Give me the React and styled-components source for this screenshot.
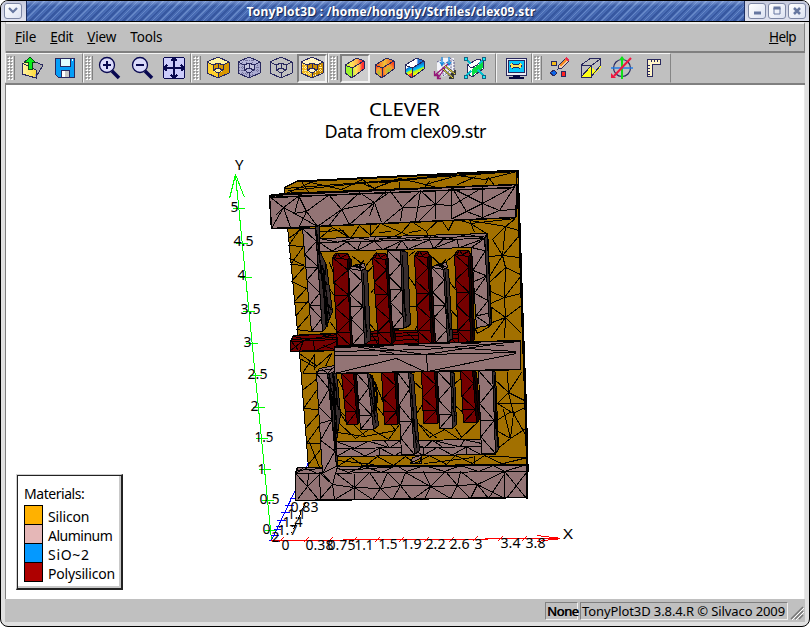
import React from "react";
import styled, { createGlobalStyle, css } from "styled-components";

const Global = createGlobalStyle`
  * { box-sizing: border-box; }
  html, body { margin: 0; background: #fff; overflow: hidden; }
  body { font-family: "Noto Sans", "Open Sans", sans-serif; color: #000; }
`;

/* ---------- window chrome ---------- */
const Window = styled.div`
  width: 810px; height: 627px; overflow: hidden;
  display: flex; flex-direction: column;
  border: 1px solid #000; border-radius: 8px; background: #e0e0e0;
`;
const TitleBar = styled.header`
  height: 21px; flex: none; display: flex;
  background: linear-gradient(#c5c9dc, #dfe2ef);
  border-bottom: 1px solid #000;
`;
const TitleSide = styled.div`
  width: ${(p) => p.$w}px; display: flex; align-items: center;
  gap: 2px; padding-left: 3px;
`;
const FrameButton = styled.button`
  width: 18px; height: 16px; padding: 0; border: 1px solid #7d87a5; border-radius: 3px;
  background: linear-gradient(135deg, #fff, #dce2f2); display: grid; place-items: center;
`;
const TitleText = styled.div`
  flex: 1; border-left: 1px solid #1c2f63; border-right: 1px solid #1c2f63;
  background:
    linear-gradient(rgba(205,220,255,.4), rgba(100,135,210,.1) 25%, rgba(60,80,160,.12)),
    repeating-linear-gradient(135deg, #688bc9 0 1px, #476bb3 1px 3px, #34569e 3px 5px, #476bb3 5px 6px);
  color: #fff; font: bold 12px/21px "Noto Sans", sans-serif; letter-spacing: ${(p) => p.$track}px;
  text-align: center; padding-left: 11px; text-shadow: 1px 1px 1px #102050; white-space: nowrap;
`;
const Body = styled.div`
  flex: 1; min-height: 0; display: flex; flex-direction: column;
  margin: 0 4px 4px; background: #c0c0c0;
`;
const MenuBar = styled.nav`
  height: 31px; flex: none; display: flex; align-items: center; gap: 14px;
  margin-left: 1px; padding: 0 8px 1px 9px;
  border-top: 2px solid #ededed; border-bottom: 2px solid #808080; border-right: 1px solid #808080;
`;
const MenuItem = styled.span`
  font-size: 13.5px; line-height: 20px; letter-spacing: ${(p) => p.$track || 0}px;
  ${(p) => p.$end && css`margin-left: auto;`}
  &::first-letter { text-decoration: ${(p) => (p.$plain ? "none" : "underline")}; }
`;
const Toolbar = styled.div`
  height: 32px; flex: none; display: flex; border-bottom: 2px solid #808080;
`;
const Group = styled.div`
  width: ${(p) => p.$w}px; flex: none; height: 30px; display: flex; align-items: center;
  border: 1px solid; border-color: #f4f4f4 #858585 #c0c0c0 #f4f4f4;
`;
const Grip = styled.div`
  width: ${(p) => p.$w}px; height: 24px; flex: none; display: flex;
  &::before {
    content: ""; width: 6px; margin-left: 1px;
    background: radial-gradient(circle at 1px 1px, #8a8a8a 0.6px, transparent 1px) 0 0 / 3px 3px,
      radial-gradient(circle at 2px 2px, #fff 0.7px, transparent 1px) 0 0 / 3px 3px;
  }
  &::after { content: ""; width: 1px; margin-left: 1px; background: #808080; }
`;
const ToolButton = styled.button`
  width: ${(p) => p.$w}px; height: 29px; padding: 0; flex: none; display: grid; place-items: center;
  background: transparent; border: 2px solid transparent;
  ${(p) => p.$pressed && css`background: #cdcdcd; border-color: #808080 #f2f2f2 #f2f2f2 #808080;`}
`;
const Glyph = styled.svg`width: 24px; height: 24px; display: block; overflow: visible; shape-rendering: ${(p) => (p.$soft ? "auto" : "crispEdges")};`;

const Canvas = styled.main`
  position: relative; flex: 1; min-height: 0; background: #fff; overflow: hidden;
  border-left: 1px solid #808080; border-right: 1px solid #e8e8e8;
`;
const Scene = styled.svg`display: block; width: 798px; height: 515px;`;
const Legend = styled.section`
  position: absolute; left: 10px; top: 389px; width: 107px; height: 116px;
  border: 1px solid #d0d0d0; border-right: 2px solid #222; border-bottom: 2px solid #222;
  background: #fff; padding: 11px 0 0 7px;
  box-shadow: inset 1px 1px 0 #222, inset -2px -2px 0 #c9c9c9;
  font-size: 14px; line-height: 19px;
`;
const LegendTitle = styled.div`height: 19px; letter-spacing: -0.45px; line-height: 16px;`;
const LegendRow = styled.div`
  height: 19px; display: flex; gap: 5px; line-height: 24px; white-space: nowrap; letter-spacing: ${(p) => p.$track}px;
`;
const Swatch = styled.i`width: 19px; height: 20px; border: 1px solid #000; background: ${(p) => p.$color};`;

const StatusBar = styled.footer`
  height: 23px; flex: none; display: flex; justify-content: flex-end; align-items: center; gap: 2px;
  padding-right: 1px; font-size: 13px; line-height: 16px; background: #c0c0c0;
`;
const StatusCell = styled.span`
  width: ${(p) => p.$w}px; height: 18px; padding-left: 1px; white-space: nowrap;
  border: 1px solid; border-color: #808080 #efefef #efefef #808080;
  letter-spacing: ${(p) => p.$track}px; ${(p) => p.$strong && css`text-shadow: 0.5px 0 #000;`}
`;

/* ---------- toolbar icons ---------- */
const NAVY = "#28285e";
const Ink = ({ d, w = 1, c = NAVY, f = "none" }) => <path d={d} stroke={c} strokeWidth={w} fill={f} />;

const Cube = ({ top, left, right, wire, dots }) => (
  <Glyph viewBox="0 0 24 24">
    {top && (
      <>
        <path d="M12 1L23 6V17L12 22L1 17V6Z" fill={left} />
        <path d="M12 11L23 6V17L12 22Z" fill={right} />
        <path d="M1 6L12 1L23 6L17 9L12 7L7 9Z" fill={top} />
        <path d="M7 9L12 7L17 9V14L12 17L7 14Z" fill={wire ? "#c5c5de" : right} />
        <path d="M7 15L12 12L17 15L12 17Z" fill={top} />
      </>
    )}
    {dots && <path d="M2 8H7M2 11H7M2 14H7M4 17H12M13 19H17M17 11H23M17 14H23M6 4H18M5 6V18M9 16V21M15 16V20M20 7V18M9 2V8M15 2V8" stroke={dots} strokeWidth="1" strokeDasharray="1 1" />}
    <Ink d="M12 1L23 6V17L12 22L1 17V6ZM1 6L7 9L12 7L17 9L23 6M7 9V14L12 17L17 14V9M12 7V12L7 14M12 12L17 14M12 17V22" />
  </Glyph>
);
const Prism = ({ face, side, top }) => (
  <>
    <path d="M2 9L9 12V22L2 17Z" fill={face} />
    <path d="M9 12L21 5V13L9 22Z" fill={side} />
    <path d="M2 9L14 2L21 5L9 12Z" fill={top} />
    <Ink d="M2 9L14 2L21 5V13L9 22L2 17ZM2 9L9 12L21 5M9 12V22" />
  </>
);
const Gradients = () => (
  <defs>
    <linearGradient id="heat" x1="0" x2="1"><stop stopColor="#b8f53a" /><stop offset=".35" stopColor="#ffe25a" /><stop offset=".65" stopColor="#ffb04a" /><stop offset=".85" stopColor="#f33" /></linearGradient>
    <radialGradient id="lime" cx=".55" cy=".6" r=".75"><stop stopColor="#96c830" /><stop offset=".4" stopColor="#f8a030" /><stop offset=".8" stopColor="#f8401c" /></radialGradient>
    <linearGradient id="warm" x1="0" x2="1"><stop stopColor="#f8401c" /><stop offset=".5" stopColor="#f0c038" /><stop offset="1" stopColor="#f8401c" /></linearGradient>
    <linearGradient id="bands" y1="0" y2="1" x1="0" x2=".3"><stop stopColor="#fff" /><stop offset=".3" stopColor="#fff" /><stop offset=".32" stopColor="#16c" /><stop offset=".55" stopColor="#0cf" /><stop offset=".6" stopColor="#9e3" /><stop offset=".8" stopColor="#ff0" /><stop offset=".85" stopColor="#f42" /></linearGradient>
    <linearGradient id="cool" x1="0" x2="1"><stop stopColor="#fff" /><stop offset=".6" stopColor="#fff" /><stop offset=".7" stopColor="#1870d8" /><stop offset="1" stopColor="#1870d8" /></linearGradient>
    <linearGradient id="paper" x1="0" x2="1"><stop stopColor="#fff5aa" /><stop offset="1" stopColor="#ffda38" /></linearGradient>
  </defs>
);
const OpenIcon = () => (
  <Glyph viewBox="0 0 24 24">
    <path d="M7 6L17 6L23 9L17 21L11 16Z" fill="#adadad" />
    <path d="M2 7L6 5L16 14L15 22L2 18Z" fill="url(#paper)" />
    <Ink d="M2 7V18L16 22V14L2 7M15 6L23 9L16 21M4 6L7 4" />
    <path d="M10 1L15 6H12V13H8V6H5Z" fill="#08ef18" stroke="#064c12" />
  </Glyph>
);
const SaveIcon = () => (
  <Glyph viewBox="0 0 24 24">
    <path d="M2 2H21V21H5L2 18Z" fill="#049ef8" stroke={NAVY} />
    <rect x="7" y="2" width="10" height="8" fill="#dffcff" stroke={NAVY} />
    <rect x="8" y="14" width="8" height="7" fill="#c6c6c6" stroke={NAVY} />
    <rect x="9" y="15" width="3" height="6" fill="#fff" /><path d="M19 3V5" stroke="#fff" />
  </Glyph>
);
const ZoomIcon = ({ plus }) => (
  <Glyph viewBox="0 0 24 24" $soft>
    <circle cx="10" cy="9" r="7.5" fill="#dadafa" stroke="#080850" strokeWidth="1.3" />
    <path d="M15 15L22 22" stroke="#080850" strokeWidth="3.5" />
    <path d={plus ? "M6 9H14M10 5V13" : "M6 9H14"} stroke="#080850" strokeWidth="2" />
  </Glyph>
);
const FitIcon = () => (
  <Glyph viewBox="0 0 24 24">
    <rect x="1.5" y="1.5" width="21" height="21" rx="2" fill="#ccccfb" stroke="#080850" />
    <path d="M2 12H22M12 2V22M9 5L12 2L15 5M9 19L12 22L15 19M5 9L2 12L5 15M19 9L22 12L19 15" stroke="#080850" fill="none" strokeWidth="1.5" />
  </Glyph>
);
const VectorIcon = () => (
  <Glyph viewBox="0 0 24 24" $soft>
    <path d="M4 6L10 2L21 2V15L10 21L4 14Z" fill="#f4f4fa" />
    <path d="M4 6L10 3M8 10L18 4V14L10 20V10M17 2L21 5V16L14 20" stroke="#555587" strokeDasharray="2 1" fill="none" />
    <path d="M9 1V8M16 1V8M7 6L9 9L11 6M14 6L16 9L18 6" stroke="#1689de" fill="none" strokeWidth="1.3" />
    <path d="M15 8L2 19M1.5 15V19.5H6M12 12L5 22M4.5 18V22.5H8" stroke="#951577" fill="none" strokeWidth="1.3" />
    <path d="M12 10L22 18M22 14V18H18M10 13L20 22M20 18V22H16" stroke="#333" fill="none" strokeWidth="1.8" />
    <path d="M12 10L22 18M10 13L20 22" stroke="#ffed32" />
  </Glyph>
);
const ExpandIcon = () => (
  <Glyph viewBox="0 0 24 24">
    <path d="M4 9L15 3L20 5V13L9 21L4 17Z" fill="#fff" />
    <path d="M4 11L9 13L20 6V12L9 20V13Z" fill="#05dc44" />
    <Ink d="M4 9L15 3L20 5V13L9 21L4 17ZM4 9L9 12L20 5" />
    <path d="M3 3L8 8M21 3L16 8M3 20L8 15M21 20L15 14" stroke="#04bfd0" strokeWidth="2" />
    {[[1, 1], [19, 1], [1, 19], [19, 19]].map(([x, y]) => <rect key={`${x}${y}`} x={x} y={y} width="3" height="3" fill="#18eefa" stroke="#186382" />)}
  </Glyph>
);
const MonitorIcon = () => (
  <Glyph viewBox="0 0 24 24">
    <rect x="2" y="2" width="20" height="17" fill="#ececf4" stroke={NAVY} />
    <rect x="4" y="4" width="16" height="12" fill="#08c7fb" stroke={NAVY} />
    <path d="M7 8L9 10L7 12M17 8L15 10L17 12M8 10H16" stroke={NAVY} strokeWidth="3.4" fill="none" />
    <path d="M7 8L9 10L7 12M17 8L15 10L17 12M8 10H16" stroke="#ffe45b" strokeWidth="1.5" fill="none" />
    <path d="M9 19H16V21H20V23H5V21H9Z" fill="#080840" />
  </Glyph>
);
const DrawIcon = () => (
  <Glyph viewBox="0 0 24 24">
    <rect x="3" y="5" width="5" height="4" fill="#f5bd18" stroke={NAVY} />
    <rect x="13" y="15" width="4" height="5" fill="#f22" stroke={NAVY} />
    <path d="M6 14L9 17L6 20L2 17Z" fill="#0b65e8" stroke={NAVY} />
    <path d="M11 9L18 2L21 5L14 12L10 13Z" fill="#f4cda8" stroke={NAVY} />
    <path d="M12 10L19 3" stroke="#f48922" strokeWidth="2" /><path d="M18 2L21 5" stroke="#ed284f" strokeWidth="2" />
  </Glyph>
);
const CutIcon = () => (
  <Glyph viewBox="0 0 24 24">
    <path d="M2 21L12 10V21ZM12 10L22 4V11L12 21Z" fill="#ffff16" />
    <path d="M12 10L21 3V11L16 15Z" fill="#c0c0c0" />
    <Ink d="M2 9L12 10V21H2ZM2 9L12 2L21 2V10L12 21M12 10L21 3M2 21L12 10" />
  </Glyph>
);
const RotateIcon = () => (
  <Glyph viewBox="0 0 24 24" $soft>
    <circle cx="12" cy="12" r="8.5" fill="none" stroke={NAVY} strokeWidth="1.2" />
    <path d="M12 1V23" stroke="#10df19" strokeWidth="2" /><path d="M1 12H23" stroke="#247ce6" strokeWidth="1.6" />
    <path d="M21 2L4 20" stroke="#ef1640" strokeWidth="2" fill="none" /><path d="M1 17L6 22H1Z" fill="#ef1640" />
    <path d="M9 4L12 0L15 4" fill="#10df19" />
  </Glyph>
);
const RulerIcon = () => (
  <Glyph viewBox="0 0 24 24">
    <path d="M5 3H18V8H10V20H5Z" fill="#fff5c7" stroke={NAVY} />
    <path d="M9 4V6M12 4V6M15 4V6M6 9H8M6 12H8M6 15H8M6 18H8" stroke={NAVY} />
  </Glyph>
);

/* ---------- device scene ---------- */
const SI = "#a27000", AL = "#937475", RED = "#750000", DARK = "#382e2f";
const mix = (a, b, t) => [a[0] + (b[0] - a[0]) * t, a[1] + (b[1] - a[1]) * t];
const pt = (p) => `${p[0].toFixed(1)} ${p[1].toFixed(1)}`;
const seg = (a, b) => `M${pt(a)}L${pt(b)}`;

/* A quad a-b (start edge) to d-c (end edge), split in n cells with diagonals. */
const Bar = ({ q, n = 5, fill, shift = 0 }) => {
  const [a, b, c, d] = q;
  let mesh = "";
  for (let i = 0; i < n; i++) {
    const t0 = i / n, t1 = (i + 1) / n;
    mesh += i % 2 === shift ? seg(mix(a, d, t0), mix(b, c, t1)) : seg(mix(b, c, t0), mix(a, d, t1));
    if (i && i % 3 === 0) mesh += seg(mix(a, d, t0), mix(b, c, t0));
  }
  return <><path d={`M${q.map(pt).join("L")}Z`} fill={fill} stroke="#000" /><path d={mesh} stroke="#000" fill="none" /></>;
};
const Poly = ({ p, fill, w = 1 }) => <polygon points={p} fill={fill} stroke="#000" strokeWidth={w} />;
const fan = (c, pts) => pts.map((p) => seg(c, p)).join("");

const Finger = ({ x1, x2, y1, x3, x4, y2, color, n = 5, side = 4 }) => {
  const edge = color === RED ? "#190000" : DARK;
  return (
    <>
      <Poly p={`${x2},${y1} ${x2 + side},${y1 + 2} ${x4 + side},${y2 - 4} ${x4},${y2}`} fill={edge} />
      <path d={`M${x2 + 2} ${y1 + 5}L${x4 + 2} ${y2 - 6}M${x2 + 3} ${y1 + 20}L${x4} ${y2 - 25}M${x2} ${y1 + 30}L${x4 + 3} ${y2 - 12}`} stroke="#000" />
      <Bar q={[[x1, y1], [x2, y1], [x4, y2], [x3, y2]]} n={n} fill={color} />
    </>
  );
};

const upperRed = [[333, 348, 257, 338, 351, 345], [373, 386, 257, 379, 392, 344], [415, 428, 255, 419, 432, 343], [455, 469, 254, 459, 471, 343]];
const upperAl = [[349, 362, 268, 353, 365, 344, 6], [388, 401, 250, 393, 404, 328, 7], [432, 444, 267, 436, 448, 342, 5]];
const lowerRed = [[342, 354, 373, 347, 358, 424], [382, 395, 372, 385, 398, 424], [422, 435, 371, 424, 438, 423], [461, 473, 370, 464, 477, 422]];
const lowerAl = [[357, 368, 373, 361, 374, 429, 5], [398, 409, 372, 402, 415, 454, 5], [438, 451, 371, 440, 453, 428, 4], [479, 493, 370, 482, 496, 453, 3]];

const siliconMesh = [
  /* left strip */
  "M289 238L303 228M289 245L304 246M289 245L301 228M291 264L305 265M291 264L304 246M305 265L290 258M292 281L306 265M292 281L307 288M294 302L308 302M294 302L307 288M296 316L309 300M297 329L310 314M297 329L312 331M300 353L318 366M303 373L315 354M303 373L317 373M304 389L318 378M304 408L319 409M304 408L317 390M306 428L321 411M307 443L322 443M307 443L320 425M308 465L322 448M315 353V369M332 353L326 366M302 359L316 367L333 352M320 467L310 442",
  /* strip under the top bar */
  "M320 238L333 227L351 238L360 225L371 235L381 223L402 232L412 221L427 231L441 218L449 230L455 218L471 223L487 233M371 235V223M402 232L420 239M402 232L390 239M427 231L430 238M351 238L340 228M470 219L475 232M471 223L516 218M320 231L345 230M380 232L392 231M410 232L422 230",
  fan([506, 226], [[470, 220], [519, 230], [503, 255], [493, 239], [516, 218]]),
  fan([503, 255], [[489, 256], [520, 257], [493, 239], [519, 236], [490, 276], [506, 267]]),
  fan([506, 267], [[490, 282], [521, 274], [505, 297]]),
  fan([505, 297], [[491, 303], [522, 293], [491, 291], [506, 317], [521, 276]]),
  fan([506, 317], [[491, 306], [474, 329], [491, 338], [505, 338], [522, 333], [522, 305]]),
  fan([509, 392], [[494, 378], [525, 400], [522, 372], [498, 403], [514, 413], [508, 372]]),
  fan([514, 413], [[498, 403], [527, 406], [511, 438], [527, 436]]),
  fan([511, 438], [[497, 430], [497, 449], [528, 427], [504, 409]]),
  "M497 420L512 411M490 456L528 457M497 403L526 403M500 464L528 457",
  /* gaps between fingers */
  "M330 262L335 275M326 282L338 300M331 322L339 333M365 275L376 263M371 293L379 282M370 323L378 333M409 276L418 289M408 306L420 306M411 338L420 321M449 280L459 293M450 308L461 320M471 286L478 300M472 321L478 333L490 326M353 256L366 266L377 252M430 254L442 265L458 252M470 260L474 250M410 255L416 250",
  "M339 379L347 397M339 410L348 424M376 383L385 405M378 407L396 430M413 380L424 390M415 416L426 400M454 384L464 376M455 405L464 412",
  "M338 432L365 436L396 430M341 424L356 438L371 428L389 439L400 424M415 418L430 437L445 429L460 439L480 420M340 410L366 436M420 424L438 438M456 428L463 438",
  /* strip above the bottom bar */
  "M338 466L352 457L365 466L378 456L394 465L406 456L416 463L430 455L447 464L456 455L473 463L485 455L502 463M338 460L375 464M425 463L474 457M475 455V464",
].join("");

const topBarMesh = [
  fan([284, 207], [[271, 197], [300, 195], [272, 228], [276, 215], [295, 213], [291, 227]]),
  fan([307, 211], [[299, 195], [295, 213], [299, 228], [318, 226], [330, 194]]),
  fan([342, 209], [[329, 194], [360, 192], [318, 226], [329, 226], [350, 224]]),
  fan([375, 202], [[360, 192], [386, 191], [342, 209], [370, 216], [382, 222], [391, 191]]),
  fan([403, 207], [[391, 191], [421, 190], [385, 222], [401, 221], [416, 207]]),
  fan([436, 204], [[421, 190], [452, 188], [418, 207], [419, 221], [436, 218], [453, 205], [436, 190]]),
  fan([467, 211], [[453, 188], [483, 203], [453, 218], [483, 217]]),
  fan([500, 210], [[483, 203], [516, 185], [483, 217], [516, 209]]),
  "M300 195L295 213L318 226M375 202L350 224M421 190L416 221M452 188V218M483 186V217M483 203L516 185M272 228L316 228M483 203L453 188M453 205L483 187",
].join("");

const bottomBarMesh = [
  fan([308, 486], [[296, 473], [298, 499], [321, 473], [319, 499], [309, 473]]),
  fan([333, 484], [[321, 473], [335, 499], [320, 499], [354, 487], [336, 473]]),
  fan([355, 487], [[337, 473], [355, 473], [337, 498], [355, 499], [381, 488], [370, 472], [373, 499]]),
  fan([381, 488], [[370, 472], [402, 485], [373, 499], [392, 499], [388, 472]]),
  fan([401, 485], [[388, 472], [406, 472], [393, 499], [431, 485], [412, 499]]),
  fan([431, 486], [[406, 472], [424, 471], [413, 499], [425, 499], [451, 498], [446, 471]]),
  fan([458, 485], [[446, 471], [461, 471], [431, 486], [451, 498], [471, 498], [478, 484]]),
  fan([478, 484], [[461, 471], [505, 471], [471, 498], [489, 498]]),
  "M505 471V498L478 484M506 472L489 498M507 498L527 472M506 472L527 498M320 473L321 499",
].join("");

const Device = () => (
  <g shapeRendering="crispEdges" strokeWidth="1" fill="none" strokeLinejoin="round">
    {/* substrate */}
    <Poly p="288,226 518,202 521,240 523,320 526,390 528,440 528,472 309,468 300,352" fill={SI} />
    <path d={siliconMesh} stroke="#000" />
    <path d="M518 170L520 230L523 320L526 400L528 472" stroke="#000" strokeWidth="2.5" />
    <Poly p="285,187 297,181 518,170 519,184 285,194" fill={SI} />
    <path d="M285 188L518 170M289 190L350 184L430 177L518 171M287 193L311 182L342 189L363 179L374 188L400 178L426 184L458 175L485 179L518 171M302 181L310 193M363 183L380 190M374 188L398 179M424 188L430 181M426 184L445 189M458 184L477 176M486 184L489 177L495 185M400 190V181" stroke="#000" />
    <path d="M298 181L518 170M380 182L456 174" stroke="#000" strokeWidth="2" />
    {/* top rail */}
    <Poly p="270,196 285,194 518,184 516,217 272,228" fill={AL} w={1.5} />
    <path d={topBarMesh} stroke="#000" />
    <path d="M270 197L516 187M270 195L285 193L518 184" stroke="#000" strokeWidth="1.5" />
    <path d="M517 170V216M519 170V200" stroke="#000" strokeWidth="1.5" />
    {/* upper loop */}
    <Poly p="316,226 320,225 321,252 327,265 333,311 326,328 323,331" fill={DARK} />
    <path d="M317 230L328 327M319 250L325 290L326 325M321 262L329 323M326 265L324 295L332 310M323 265L330 316M318 242L321 242M319 269L328 285" stroke="#000" strokeWidth="1.3" />
    <Bar q={[[303, 228], [316, 228], [323, 331], [312, 331]]} n={8} fill={AL} />
    <Bar q={[[320, 242], [320, 251], [472, 247], [485, 238]]} n={12} fill={AL} />
    <Bar q={[[320, 238], [320, 242], [485, 238], [487, 233]]} n={9} fill={AL} />
    <path d="M380 238L485 236" stroke="#000" />
    <Poly p="485,238 488,233 492,324 489,326" fill={DARK} w={1.5} />
    <Bar q={[[472, 247], [485, 238], [490, 325], [477, 327]]} n={7} fill={AL} />
    {/* gate runner behind the fingers */}
    <Poly p="346,331 462,329 462,344 346,344" fill={RED} />
    <path d="M346 333L462 332M346 337L462 334M346 341L462 338M370 330L378 343L389 330M407 332L419 342M448 331L456 343" stroke="#000" />
    <Poly p="388,250 405,250 409,326 393,330" fill={DARK} />
    {upperRed.map(([x1, x2, y1, x3, x4, y2]) => (
      <g key={x1}>
        <Finger x1={x1} x2={x2} y1={y1} x3={x3} x4={x4} y2={y2} color={RED} n={7} />
        <Poly p={`${x1},${y1} ${x1 + 3},${y1 - 4} ${x2},${y1 - 4} ${x2 + 2},${y1} ${x2},${y1 + 2}`} fill={RED} />
        <path d={`M${x1 + 2} ${y1}L${x1 + 5} ${y1 - 4}L${x1 + 8} ${y1}L${x2} ${y1 - 3}`} stroke="#000" />
      </g>
    ))}
    {upperAl.map(([x1, x2, y1, x3, x4, y2, side]) => (
      <g key={x1}>
        <Finger x1={x1} x2={x2} y1={y1} x3={x3} x4={x4} y2={y2} side={side} color={AL} n={6} />
        {y1 > 260 && <><Poly p={`${x1},${y1} ${x1 + 5},${y1 - 3} ${x2 + 3},${y1 - 5} ${x2 + 4},${y1} ${x2},${y1 + 2}`} fill={AL} /><path d={`M${x1 + 5} ${y1 - 2}L${x2 + 3} ${y1 - 1}M${x1 + 7} ${y1 - 4}L${x2} ${y1 + 1}M${x2 - 4} ${y1}L${x2 + 2} ${y1 - 8}`} stroke="#000" strokeWidth="1.5" /></>}
      </g>
    ))}
    {/* polysilicon contact */}
    <Poly p="291,341 294,335 337,333 337,350 291,351" fill={RED} w={1.5} />
    <path d="M292 339L337 337M294 336L308 339L337 334M291 341L337 339M291 350L304 340L300 351M314 340L315 350M316 350L337 341M324 345L337 350M292 341L299 350M322 334L334 338" stroke="#000" />
    {/* lower loop */}
    <Bar q={[[337, 441], [337, 448], [496, 446], [481, 439]]} n={9} fill={AL} />
    <Bar q={[[337, 448], [337, 456], [496, 454], [496, 446]]} n={11} fill={AL} shift={1} />
    <Poly p="328,369 335,365 338,381 341,414 337,440 338,470 332,484" fill={DARK} />
    <path d="M330 372L336 470M333 368L338 438M335 375L335 465M331 387L340 410M334 395L337 455M328 376L335 387L332 408M336 383L338 405" stroke="#000" strokeWidth="1.4" />
    <path d="M317 373L320 368L335 365L337 370L328 374Z" fill={AL} stroke="#000" />
    <path d="M317 371L334 368M322 368L328 373L336 365" stroke="#000" />
    {lowerRed.map(([x1, x2, y1, x3, x4, y2]) => <Finger key={x1} x1={x1} x2={x2} y1={y1} x3={x3} x4={x4} y2={y2} color={RED} n={4} />)}
    {lowerAl.map(([x1, x2, y1, x3, x4, y2, side]) => <Finger key={x1} x1={x1} x2={x2} y1={y1} x3={x3} x4={x4} y2={y2} side={side} color={AL} n={y2 > 440 ? 5 : 4} />)}
    <path d="M371 375L376 384L378 398L374 414M373 377L376 406" stroke="#000" strokeWidth="2" />
    {/* middle rail */}
    <Poly p="335,346 521,340 521,369 335,373" fill={AL} w={1.5} />
    <path d="M335 355L425 354L517 352M335 347L370 346L425 354L521 340M335 351L426 349L521 341M370 347L400 344L450 347L517 351M427 354L428 371L517 353M335 373L397 358L425 371M350 345L395 353M410 343L453 342L505 345" stroke="#000" />
    {/* bottom rail */}
    <Poly p="296,473 298,467 322,467 338,466 527,464 527,497 296,500" fill={AL} w={1.5} />
    <path d={bottomBarMesh} stroke="#000" />
    <path d="M296 473L527 471M298 470L321 468L356 469L400 466L527 465M297 473L304 467L318 473L337 467L349 472L365 466L382 472L397 465L407 471L425 465L445 471L461 465L479 471L494 465L505 471L527 464" stroke="#000" />
    <path d="M411 463L413 457L422 455L422 463ZM411 460L420 463L422 457L411 463" stroke="#000" fill={AL} />
    <Bar q={[[317, 373], [328, 373], [337, 466], [323, 473]]} n={6} fill={AL} />
    <path d="M323 473L333 484L338 466" stroke="#000" fill={AL} />
    <path d="M527 465V498" stroke="#000" strokeWidth="2" />
  </g>
);

/* [label, x, baseline, text width] */
const yLabels = [["5", 231, 211, 8], ["4.5", 234, 245, 20], ["4", 238, 279, 8], ["3.5", 241, 313, 20], ["3", 244, 346, 8], ["2.5", 248, 378, 20], ["2", 251, 410, 8], ["1.5", 255, 441, 19], ["1", 258, 473, 8], ["0.5", 260, 503, 20], ["0", 263, 533, 8]];
const xLabels = [["0", 282, 549, 8], ["0.38", 306, 549, 28], ["0.75", 328, 549, 28], ["1.1", 355, 549, 19], ["1.5", 379, 548, 19], ["1.9", 402, 548, 20], ["2.2", 426, 548, 20], ["2.6", 450, 548, 20], ["3", 475, 548, 8], ["3.4", 501, 547, 20], ["3.8", 526, 547, 20]];
const zLabels = [["0.83", 291, 511, 28], ["1.1", 288, 518, 18], ["1.4", 283, 526, 20], ["1.7", 278, 534, 20], ["2", 272, 541, 8]];
const yTicks = [[239, 208], [242, 243], [246, 277], [249, 311], [252, 343], [256, 375], [259, 407], [262, 438], [265, 469], [268, 500], [271, 530]];

const Tick = styled.text`font: 15px "Noto Sans", sans-serif; fill: #000; stroke: none;`;
const AxisName = styled.text`font: 15px "Noto Sans", sans-serif; fill: #000;`;
const PlotTitle = styled.text`font: 18px "Noto Sans", sans-serif; fill: #000;`;

const Plot = () => (
  <Scene viewBox="6.5 84.5 798 515">
    <PlotTitle x="369.5" y="115.5" textLength="71" lengthAdjust="spacingAndGlyphs">CLEVER</PlotTitle>
    <PlotTitle x="325" y="137.5" textLength="162">Data from clex09.str</PlotTitle>
    <g shapeRendering="crispEdges" fill="none">
      <path d={"M272 540L236 174M236 174L230 198M236 174L245 197M236 174L238 196" + yTicks.map(([x, y]) => `M${x - 6} ${y}H${x + 6}`).join("")} stroke="#00ff00" />
      <path d="M272 540L309 462M269 540H278M271 535H279M274 529H281M276 526H283M277 520H286M281 512H290M285 505H294M290 498H298M294 492H300" stroke="#00f" />
      <path d="M272 540L560 538M284 537L279 542M309 537L304 542M333 537L328 542M357 537L352 542M380 537L375 542M404 537L399 542M429 537L424 542M454 537L449 542M478 536L473 541M503 536L498 541M527 536L522 541M538 535L560 538L538 541M549 537H557" stroke="#f00" />
      <path d="M549 538H558" stroke="#f00" strokeWidth="3" />
      <path d="M306 502L292 533" stroke="#000" strokeDasharray="7 4" />
    </g>
    {[...yLabels, ...xLabels, ...zLabels].map(([t, x, y, w]) => <Tick key={`${t}-${x}`} x={x} y={y} textLength={w} lengthAdjust="spacingAndGlyphs">{t}</Tick>)}
    <AxisName x="235.5" y="169" textLength="9">Y</AxisName>
    <AxisName x="563.5" y="538.5" textLength="10" lengthAdjust="spacingAndGlyphs">X</AxisName>
    <Device />
  </Scene>
);

const materials = [["Silicon", "#ffb100", -0.15], ["Aluminum", "#e5b7b7", -0.5], ["SiO~2", "#0499ff", 0.7], ["Polysilicon", "#ae0000", -0.2]];

export default function App() {
  return (
    <Window>
      <Global />
      <TitleBar>
        <TitleSide $w={25}><FrameButton><svg width="10" height="8"><path d="M1 1L5 5L9 1" fill="none" stroke="#6677a0" strokeWidth="2.2" /></svg></FrameButton></TitleSide>
        <TitleText $track={0.22}>TonyPlot3D : /home/hongyiy/Strfiles/clex09.str</TitleText>
        <TitleSide $w={64}>
          <FrameButton><svg width="10" height="10"><path d="M2 7H9" stroke="#6677a0" strokeWidth="3" /></svg></FrameButton>
          <FrameButton><svg width="10" height="10"><path d="M2 2H8V8H2Z" fill="none" stroke="#6677a0" /><path d="M1.5 2H8.5" stroke="#6677a0" strokeWidth="3" /></svg></FrameButton>
          <FrameButton><svg width="10" height="10"><path d="M2 2L8 8M8 2L2 8" stroke="#6677a0" strokeWidth="2.5" /></svg></FrameButton>
        </TitleSide>
      </TitleBar>
      <Body>
        <MenuBar>
          <MenuItem $track={-0.1}>File</MenuItem><MenuItem $track={-0.3}>Edit</MenuItem><MenuItem $track={-0.1}>View</MenuItem><MenuItem $plain $track={-0.2}>Tools</MenuItem><MenuItem $end $track={-0.6}>Help</MenuItem>
        </MenuBar>
        <Toolbar>
          <Group $w={78}><Grip $w={9} /><ToolButton $w={33}><OpenIcon /></ToolButton><ToolButton $w={33}><SaveIcon /></ToolButton></Group>
          <Group $w={108}><Grip $w={9} /><ToolButton $w={32}><ZoomIcon plus /></ToolButton><ToolButton $w={33}><ZoomIcon /></ToolButton><ToolButton $w={32}><FitIcon /></ToolButton></Group>
          <Group $w={137}>
            <Grip $w={10} />
            <ToolButton $w={31}><Cube top="#fff3a1" left="#ffd12c" right="#d99700" /></ToolButton>
            <ToolButton $w={32}><Cube top="#b7b7da" left="#b0b0d3" right="#aaaad0" wire dots="#75759f" /></ToolButton>
            <ToolButton $w={32}><Cube /></ToolButton>
            <ToolButton $w={30} $pressed><Cube top="#fff5c4" left="#f0b720" right="#c98b00" dots="#fff0a4" /></ToolButton>
          </Group>
          <Group $w={168}>
            <Grip $w={11} />
            <ToolButton $w={30} $pressed><Glyph viewBox="0 0 24 24"><Gradients /><Prism face="#9bf52a" side="url(#heat)" top="url(#heat)" /></Glyph></ToolButton>
            <ToolButton $w={30}><Glyph viewBox="0 0 24 24"><Prism face="url(#lime)" side="url(#lime)" top="url(#warm)" /></Glyph></ToolButton>
            <ToolButton $w={30}><Glyph viewBox="0 0 24 24"><Prism face="url(#bands)" side="url(#bands)" top="url(#cool)" /></Glyph></ToolButton>
            <ToolButton $w={30}><VectorIcon /></ToolButton>
            <ToolButton $w={30}><ExpandIcon /></ToolButton>
          </Group>
          <Group $w={36}><ToolButton $w={38}><MonitorIcon /></ToolButton></Group>
          <Group $w={139}>
            <Grip $w={11} />
            <ToolButton $w={31}><DrawIcon /></ToolButton><ToolButton $w={31}><CutIcon /></ToolButton><ToolButton $w={32}><RotateIcon /></ToolButton><ToolButton $w={31}><RulerIcon /></ToolButton>
          </Group>
        </Toolbar>
        <Canvas>
          <Plot />
          <Legend>
            <LegendTitle>Materials:</LegendTitle>
            {materials.map(([name, color, track]) => <LegendRow key={name} $track={track}><Swatch $color={color} />{name}</LegendRow>)}
          </Legend>
        </Canvas>
        <StatusBar>
          <StatusCell $w={33} $track={-0.4} $strong>None</StatusCell>
          <StatusCell $w={208} $track={-0.1}>TonyPlot3D 3.8.4.R © Silvaco 2009</StatusCell>
          <svg width="14" height="20"><path d="M1 18L13 6M5 18L13 10M9 18L13 14" stroke="#777" strokeWidth="1.5" /><path d="M2 19L14 7M6 19L14 11" stroke="#fff" /></svg>
        </StatusBar>
      </Body>
    </Window>
  );
}
